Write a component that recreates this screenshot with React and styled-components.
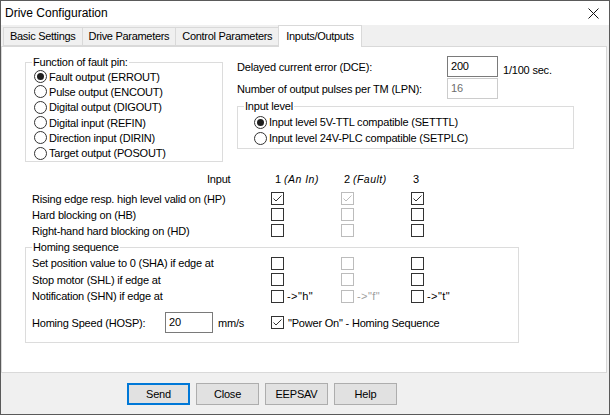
import React from 'react';
import styled, { createGlobalStyle } from 'styled-components';

const Global = createGlobalStyle`
  html, body { margin: 0; padding: 0; background: #ffffff; }
  * { box-sizing: border-box; }
`;

const Window = styled.div`
  width: 610px;
  height: 415px;
  border: 1px solid #5a5a5a;
  display: flex;
  flex-direction: column;
  background: #f0f0f0;
  font-family: "Liberation Sans", Arial, sans-serif;
  font-size: 11px;
  letter-spacing: -0.2px;
  color: #000;
`;

const TitleBar = styled.div`
  height: 24px;
  flex: none;
  background: #fff;
  display: flex;
  align-items: center;
  justify-content: space-between;
  padding: 0 10px 0 4px;
  font-size: 12px;
  letter-spacing: 0;
`;

const TabStrip = styled.div`
  height: 21px;
  flex: none;
  display: flex;
  align-items: flex-end;
  padding-left: 2px;
`;

const Tab = styled.div`
  height: ${p => (p.$active ? '22px' : '19px')};
  margin-bottom: ${p => (p.$active ? '-1px' : '0')};
  margin-right: -1px;
  padding: ${p => (p.$active ? '0 7px 1px' : '0 6px 1px')};
  border: 1px solid #d9d9d9;
  border-bottom: ${p => (p.$active ? 'none' : '1px solid #d9d9d9')};
  background: ${p => (p.$active ? '#fff' : '#f0f0f0')};
  position: relative;
  z-index: ${p => (p.$active ? 1 : 0)};
  display: flex;
  align-items: center;
  letter-spacing: -0.3px;
  white-space: nowrap;
`;

const Panel = styled.div`
  height: 327px;
  flex: none;
  margin-right: 2px;
  background: #fff;
  border: 1px solid #d9d9d9;
  padding: 9px 0 0 23px;
  display: flex;
  flex-direction: column;
`;

const TopSection = styled.div`
  display: flex;
  align-items: flex-start;
`;

const Group = styled.fieldset`
  margin: ${p => p.$margin || '0'};
  width: ${p => p.$width};
  min-inline-size: 0;
  border: 1px solid #dcdcdc;
  padding: 0;
`;

const Legend = styled.legend`
  padding: 0 1px;
  margin-left: 6px;
  line-height: 13px;
`;

const GroupBody = styled.div`
  padding: ${p => p.$padding || '0'};
`;

const RadioRow = styled.div`
  height: ${p => p.$h};
  display: flex;
  align-items: center;
  gap: 2px;
  white-space: nowrap;
`;

const RadioCircle = styled.span`
  width: 13px;
  height: 13px;
  flex: none;
  border: 1px solid #333;
  border-radius: 50%;
  background: #fff;
  display: flex;
  align-items: center;
  justify-content: center;
  &::after {
    content: '';
    width: 7px;
    height: 7px;
    border-radius: 50%;
    background: ${p => (p.$on ? '#1f1f1f' : 'transparent')};
  }
`;

const RightCol = styled.div`
  margin-left: 14px;
  width: 337px;
  display: flex;
  flex-direction: column;
`;

const FieldRow = styled.div`
  display: flex;
  align-items: center;
  height: 21px;
  margin-top: ${p => p.$mt || '0'};
  white-space: nowrap;
`;

const FieldLabel = styled.span`
  width: ${p => p.$w};
  flex: none;
`;

const TextBox = styled.div`
  width: ${p => p.$w};
  height: 21px;
  flex: none;
  border: 1px solid ${p => (p.$disabled ? '#cccccc' : '#7a7a7a')};
  color: ${p => (p.$disabled ? '#6d6d6d' : '#000')};
  background: #fff;
  padding-left: 3px;
  display: flex;
  align-items: center;
  padding-bottom: 1px;
`;

const Unit = styled.span`
  margin-left: 5px;
  padding-top: ${p => p.$pt || '0'};
`;

const HeaderRow = styled.div`
  display: grid;
  grid-template-columns: 239px 70px 70px 70px;
  margin: 10px 0 5px 7px;
  line-height: 14px;
  height: 14px;
`;

const HeaderCell = styled.div`
  padding-left: ${p => p.$pl || '3px'};
  white-space: nowrap;
`;

const Note = styled.i`
  margin-left: 3px;
  font-size: 10.5px;
  letter-spacing: 0.5px;
  font-weight: 300;
`;

const CheckGrid = styled.div`
  display: grid;
  grid-template-columns: 239px 70px 70px 1fr;
  grid-auto-rows: ${p => p.$row};
  margin-left: ${p => p.$ml || '0'};
  align-items: center;
`;

const RowLabel = styled.div`
  white-space: nowrap;
`;

const CheckCell = styled.div`
  display: flex;
  align-items: center;
  white-space: nowrap;
  color: ${p => (p.$disabled ? '#a0a0a0' : '#000')};
`;

const Box = styled.span`
  width: 13px;
  height: 13px;
  flex: none;
  border: 1px solid ${p => (p.$disabled ? '#bcbcbc' : '#333')};
  background: #fff;
  display: flex;
  align-items: center;
  justify-content: center;
`;

const Suffix = styled.span`
  margin-left: ${p => p.$ml || '3px'};
  letter-spacing: ${p => p.$ls || '0.4px'};
`;

const SpeedRow = styled.div`
  display: grid;
  grid-template-columns: 239px 1fr;
  align-items: center;
  margin-top: 8px;
  height: 21px;
`;

const SpeedCell = styled.div`
  display: flex;
  align-items: center;
  white-space: nowrap;
`;

const ButtonRow = styled.div`
  flex: 1;
  display: flex;
  align-items: flex-start;
  gap: 6px;
  padding: 10px 0 0 126px;
`;

const Button = styled.div`
  width: 63px;
  height: 22px;
  background: #e1e1e1;
  border: ${p => (p.$default ? '2px solid #0078d7' : '1px solid #adadad')};
  display: flex;
  align-items: center;
  justify-content: center;
  padding-bottom: 1px;
`;

function Radio({ on, label, h }) {
  return (
    <RadioRow $h={h}>
      <RadioCircle $on={on} />
      <span>{label}</span>
    </RadioRow>
  );
}

function Check({ on, disabled, suffix }) {
  const stroke = disabled ? '#bcbcbc' : '#333';
  return (
    <CheckCell $disabled={disabled}>
      <Box $disabled={disabled}>
        {on && (
          <svg width="11" height="11" viewBox="0 0 11 11">
            <polyline points="1.5,5.5 4,8 9.5,2.5" fill="none" stroke={stroke} strokeWidth="1" />
          </svg>
        )}
      </Box>
      {suffix}
    </CheckCell>
  );
}

const faultOptions = [
  'Fault output (ERROUT)',
  'Pulse output (ENCOUT)',
  'Digital output (DIGOUT)',
  'Digital input (REFIN)',
  'Direction input (DIRIN)',
  'Target output (POSOUT)',
];

const inputRows = [
  { label: 'Rising edge resp. high level valid on (HP)', v: [true, true, true] },
  { label: 'Hard blocking on (HB)', v: [false, false, false] },
  { label: 'Right-hand hard blocking on (HD)', v: [false, false, false] },
];

const homingRows = [
  { label: 'Set position value to 0 (SHA) if edge at' },
  { label: 'Stop motor (SHL) if edge at' },
  { label: 'Notification (SHN) if edge at', suffix: ['->"h"', '->"f"', '->"t"'] },
];

export default function App() {
  return (
    <>
      <Global />
      <Window>
        <TitleBar>
          <span>Drive Configuration</span>
          <svg width="11" height="11" viewBox="0 0 11 11">
            <path d="M0.5 0.5 L10.5 10.5 M10.5 0.5 L0.5 10.5" stroke="#111" strokeWidth="1" />
          </svg>
        </TitleBar>
        <TabStrip>
          <Tab>Basic Settings</Tab>
          <Tab>Drive Parameters</Tab>
          <Tab>Control Parameters</Tab>
          <Tab $active>Inputs/Outputs</Tab>
        </TabStrip>
        <Panel>
          <TopSection>
            <Group $width="198px">
              <Legend>Function of fault pin:</Legend>
              <GroupBody $padding="0 0 0 8px">
                {faultOptions.map((o, i) => (
                  <Radio key={o} on={i === 0} label={o} h="15.3px" />
                ))}
              </GroupBody>
            </Group>
            <RightCol>
              <FieldRow>
                <FieldLabel $w="210px">Delayed current error (DCE):</FieldLabel>
                <TextBox $w="51px">200</TextBox>
                <Unit $pt="6px">1/100 sec.</Unit>
              </FieldRow>
              <FieldRow $mt="1px">
                <FieldLabel $w="210px">Number of output pulses per TM (LPN):</FieldLabel>
                <TextBox $w="51px" $disabled>16</TextBox>
              </FieldRow>
              <Group $width="337px" $margin="1px 0 0 0">
                <Legend>Input level</Legend>
                <GroupBody $padding="1px 0 2px 16px">
                  <Radio on label="Input level 5V-TTL compatible (SETTTL)" h="16px" />
                  <Radio label="Input level 24V-PLC compatible (SETPLC)" h="16px" />
                </GroupBody>
              </Group>
            </RightCol>
          </TopSection>

          <HeaderRow>
            <HeaderCell $pl="175px">Input</HeaderCell>
            <HeaderCell $pl="4px">1<Note>(An In)</Note></HeaderCell>
            <HeaderCell>2<Note>(Fault)</Note></HeaderCell>
            <HeaderCell $pl="2px">3</HeaderCell>
          </HeaderRow>
          <CheckGrid $row="16px" $ml="7px">
            {inputRows.map(r => (
              <React.Fragment key={r.label}>
                <RowLabel>{r.label}</RowLabel>
                <Check on={r.v[0]} />
                <Check on={r.v[1]} disabled />
                <Check on={r.v[2]} />
              </React.Fragment>
            ))}
          </CheckGrid>

          <Group $width="494px" $margin="2px 0 0 0">
            <Legend>Homing sequence</Legend>
            <GroupBody $padding="1px 0 9px 6px">
              <CheckGrid $row="16.5px">
                {homingRows.map(r => (
                  <React.Fragment key={r.label}>
                    <RowLabel>{r.label}</RowLabel>
                    {[0, 1, 2].map(c => (
                      <Check
                        key={c}
                        disabled={c === 1}
                        suffix={r.suffix ? <Suffix>{r.suffix[c]}</Suffix> : null}
                      />
                    ))}
                  </React.Fragment>
                ))}
              </CheckGrid>
              <SpeedRow>
                <SpeedCell>
                  <FieldLabel $w="133px">Homing Speed (HOSP):</FieldLabel>
                  <TextBox $w="48px">20</TextBox>
                  <Unit>mm/s</Unit>
                </SpeedCell>
                <Check
                  on
                  suffix={<Suffix $ml="4px" $ls="-0.2px">"Power On" - Homing Sequence</Suffix>}
                />
              </SpeedRow>
            </GroupBody>
          </Group>
        </Panel>
        <ButtonRow>
          <Button $default>Send</Button>
          <Button>Close</Button>
          <Button>EEPSAV</Button>
          <Button>Help</Button>
        </ButtonRow>
      </Window>
    </>
  );
}
